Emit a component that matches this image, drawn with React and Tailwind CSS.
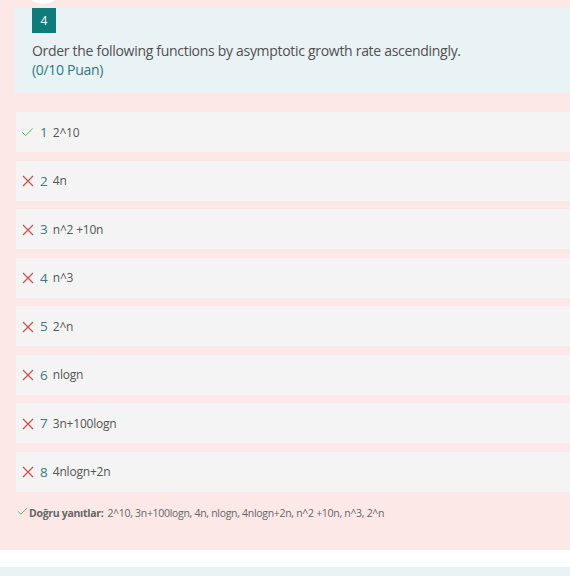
import { Check } from "lucide-react";

const options = [
    { n: 1, text: "2^10", ok: true },
    { n: 2, text: "4n", ok: false },
    { n: 3, text: "n^2 +10n", ok: false },
    { n: 4, text: "n^3", ok: false },
    { n: 5, text: "2^n", ok: false },
    { n: 6, text: "nlogn", ok: false },
    { n: 7, text: "3n+100logn", ok: false },
    { n: 8, text: "4nlogn+2n", ok: false },
];

function Cross() {
    return (
        <svg width="12" height="12" viewBox="0 0 12 12" className="mr-[6px] ml-[2px] shrink-0">
            <path d="M1 1 11 11M11 1 1 11" stroke="#d4504c" strokeWidth="1.3" fill="none" />
        </svg>
    );
}

export default function App() {
    return (
        <div className="w-[570px] h-[576px] overflow-hidden bg-white font-['Open_Sans',sans-serif]">
            <div className="relative bg-[#fde8e8] pt-2 pb-[14px]">
                <div className="absolute left-[24px] top-[-34px] w-[38px] h-[38px] rounded-full bg-white" />
                <div className="ml-[15px] bg-[#e9f2f5] pl-[17px] h-[85px]">
                    <div className="w-6 h-[25px] bg-[#0e7c7b] text-white text-[12px] flex items-center justify-center">4</div>
                    <p className="mt-[8px] text-[14px] tracking-[-0.3px] leading-[19px] text-[#505050]">
                        Order the following functions by asymptotic growth rate ascendingly.
                    </p>
                    <p className="text-[14px] tracking-[-0.3px] leading-[19px] text-[#2e7a80]">(0/10 Puan)</p>
                </div>

                <div className="mt-[19px] ml-4 flex flex-col gap-[8.5px]">
                    {options.map((o) => (
                        <div key={o.n} className="h-10 bg-[#f4f4f4] flex items-center pl-[4px] pt-[1px]">
                            {o.ok ? (
                                <Check className="w-[15px] h-[15px] text-[#4caf50] mr-[5px]" strokeWidth={1.5} />
                            ) : (
                                <Cross />
                            )}
                            <span className="text-[13.5px] text-[#3b7b82] mr-[5px]">{o.n}</span>
                            <span className="text-[12px] tracking-[-0.2px] text-[#555]">{o.text}</span>
                        </div>
                    ))}
                </div>

                <div className="mt-[12px] ml-[16px] h-[20px] flex items-center text-[10.5px] tracking-[-0.3px] text-[#666]">
                    <Check className="w-[13px] h-[13px] text-[#4caf50] -mt-[5px]" strokeWidth={1.6} />
                    <span className="font-bold mr-1">Doğru yanıtlar:</span>
                    <span>2^10, 3n+100logn, 4n, nlogn, 4nlogn+2n, n^2 +10n, n^3, 2^n</span>
                </div>
                <div className="h-[12px]" />
            </div>
            <div className="h-[17px] bg-white" />
            <div className="h-[20px] bg-[#e9f2f5]" />
        </div>
    );
}
